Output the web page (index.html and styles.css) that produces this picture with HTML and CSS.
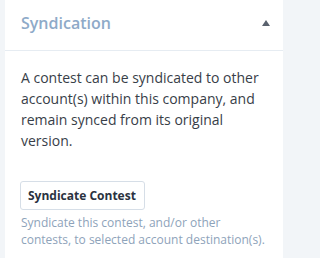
FILE: index.html
```html
<!DOCTYPE html>
<html>
<head>
<meta charset="utf-8">
<link rel="stylesheet" href="styles.css">
</head>
<body>
<section class="panel">
  <header class="panel-head">
    <h2 class="panel-title">Syndication</h2>
    <span class="caret"></span>
  </header>
  <div class="panel-body">
    <p class="desc">A contest can be syndicated to other account(s) within this company, and remain synced from its original version.</p>
    <button class="btn">Syndicate Contest</button>
    <p class="help">Syndicate this contest, and/or other contests, to selected account destination(s).</p>
  </div>
</section>
</body>
</html>
```
FILE: styles.css
```css
html, body {
  margin: 0;
  padding: 0;
  background: #f2f5f8;
  font-family: "Open Sans", "Liberation Sans", sans-serif;
}
body {
  width: 287px;
  height: 258px;
  padding: 0 4px 0 5px;
  box-sizing: border-box;
  overflow: hidden;
}
.panel {
  background: #ffffff;
  height: 258px;
}
.panel-head {
  display: flex;
  align-items: center;
  justify-content: space-between;
  height: 51px;
  padding: 0 13px 4px 16px;
  border-bottom: 1px solid #e6ecf2;
  box-sizing: border-box;
}
.panel-title {
  margin: 0;
  font-size: 16px;
  font-weight: 600;
  line-height: 22px;
  color: #8eaac8;
}
.caret {
  width: 0;
  height: 0;
  border-left: 4px solid transparent;
  border-right: 4px solid transparent;
  border-bottom: 6px solid #5a626e;
}
.panel-body {
  padding: 16px 16px 0 16px;
}
.desc {
  margin: 0 0 30px 0;
  font-size: 14px;
  line-height: 21px;
  color: #383e48;
}
.btn {
  display: block;
  font-family: inherit;
  font-size: 12px;
  font-weight: 700;
  line-height: 16px;
  color: #2a3240;
  background: #fff;
  border: 1px solid #d6dee7;
  border-radius: 3px;
  padding: 0 8px 0 7px;
  height: 29px;
  margin: 0 0 0 -1px;
}
.help {
  margin: 4px 0 0 0;
  font-size: 12px;
  line-height: 17px;
  color: #8ea3ba;
}
```
